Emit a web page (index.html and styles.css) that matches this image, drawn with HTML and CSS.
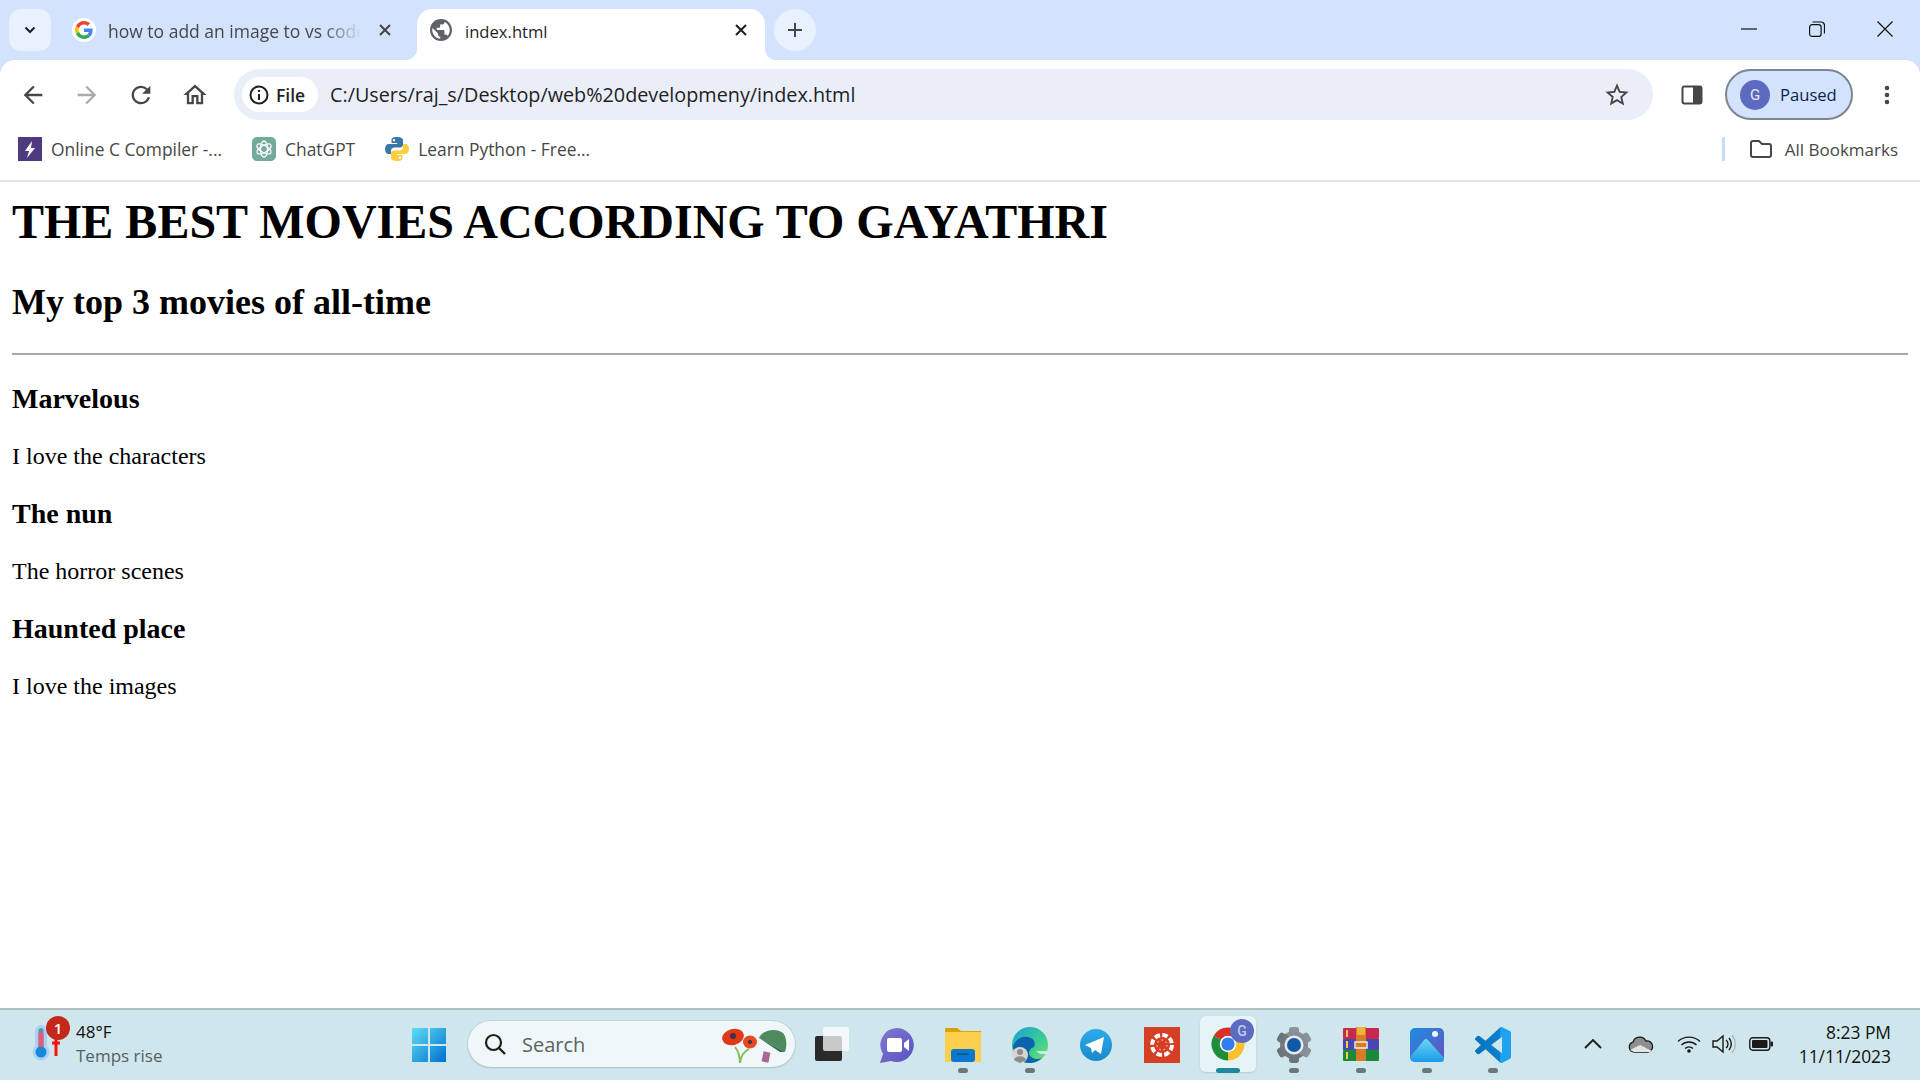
FILE: index.html
```html
<!DOCTYPE html>
<html>
    <head>
        <title>index.html</title>
        <meta charset="utf8"/>
        <link rel="stylesheet" href="styles.css">
    </head>
    <body>
        <div class="tabstrip">
            <div class="tab-search"><svg class="ico-16" viewBox="0 0 16 16"><path d="M3.5 5.5 8 10l4.5-4.5" fill="none" stroke="#1f1f1f" stroke-width="2"/></svg></div>
            <div class="tab">
                <div class="fav-round">
                    <svg class="ico-18" viewBox="0 0 48 48">
                        <path fill="#EA4335" d="M24 9.5c3.54 0 6.71 1.22 9.21 3.6l6.85-6.85C35.9 2.38 30.47 0 24 0 14.62 0 6.51 5.38 2.56 13.22l7.98 6.19C12.43 13.72 17.74 9.5 24 9.5z"/>
                        <path fill="#4285F4" d="M46.98 24.55c0-1.57-.15-3.09-.38-4.55H24v9.02h12.94c-.58 2.96-2.26 5.48-4.78 7.18l7.73 6c4.51-4.18 7.09-10.36 7.09-17.65z"/>
                        <path fill="#FBBC05" d="M10.53 28.59c-.48-1.45-.76-2.99-.76-4.59s.27-3.14.76-4.59l-7.98-6.19C.92 16.46 0 20.12 0 24c0 3.88.92 7.54 2.56 10.78l7.97-6.19z"/>
                        <path fill="#34A853" d="M24 48c6.48 0 11.93-2.13 15.89-5.81l-7.73-6c-2.15 1.45-4.92 2.3-8.16 2.3-6.26 0-11.57-4.22-13.47-9.91l-7.98 6.19C6.51 42.62 14.62 48 24 48z"/>
                    </svg>
                </div>
                <span class="tab-title tab-title-fade">how to add an image to vs code</span>
                <svg class="tab-close" viewBox="0 0 16 16"><path d="M3 3l10 10M13 3 3 13" stroke="#444" stroke-width="2"/></svg>
            </div>
            <div class="tab tab-active">
                <svg class="ico-24" viewBox="0 0 24 24"><path fill="#5f6368" d="M12 1C5.9 1 1 5.9 1 12s4.9 11 11 11 11-4.900 11-11S18.100 1 12 1zm-1 19.700c-4.300-.5-7.700-4.200-7.700-8.700 0-.7.100-1.300.2-2L9 15.500v1.100c0 1.200 1 2.200 2.200 2.200v1.900zm7.600-2.800c-.3-.9-1.100-1.500-2.100-1.500h-1.100v-3.300c0-.6-.5-1.100-1.100-1.100H7.800V9.800H10c.6 0 1.100-.5 1.100-1.100V6.500h2.200c1.200 0 2.200-1 2.200-2.200v-.4c3.200 1.300 5.200 4.400 5.200 8.100 0 2.300-.8 4.400-2.100 5.900z"/></svg>
                <span class="tab-title">index.html</span>
                <svg class="tab-close" viewBox="0 0 16 16"><path d="M3 3l10 10M13 3 3 13" stroke="#1f1f1f" stroke-width="2"/></svg>
            </div>
            <div class="tab-new"><svg class="ico-18" viewBox="0 0 18 18"><path d="M9 2v14M2 9h14" stroke="#474747" stroke-width="2"/></svg></div>
            <div class="win-btns">
                <svg class="ico-win" viewBox="0 0 16 16"><path d="M0 8h16" stroke="#111" stroke-width="1.200"/></svg>
                <svg class="ico-win" viewBox="0 0 16 16"><rect x=".6" y="3.600" width="11.500" height="11.800" rx="2.500" fill="none" stroke="#111" stroke-width="1.200"/><path d="M3.500 1h8.500a3.500 3.500 0 0 1 3.500 3.500v8" fill="none" stroke="#111" stroke-width="1.200"/></svg>
                <svg class="ico-win" viewBox="0 0 16 16"><path d="M.5.500l15 15M15.500.500l-15 15" stroke="#111" stroke-width="1.200"/></svg>
            </div>
        </div>

        <div class="toolbar">
            <div class="nav-btn"><svg class="ico-nav" viewBox="0 0 24 24"><path fill="#474747" d="M20 11H7.830l5.590-5.590L12 4l-8 8 8 8 1.410-1.410L7.830 13H20v-2z"/></svg></div>
            <div class="nav-btn"><svg class="ico-nav" viewBox="0 0 24 24"><path fill="#ababab" d="M12 4l-1.410 1.410L16.170 11H4v2h12.170l-5.580 5.590L12 20l8-8z"/></svg></div>
            <div class="nav-btn"><svg class="ico-nav" viewBox="0 0 24 24"><path fill="#474747" d="M17.650 6.350A7.958 7.958 0 0 0 12 4c-4.420 0-7.990 3.580-7.990 8s3.570 8 7.990 8c3.730 0 6.840-2.550 7.730-6h-2.080A5.990 5.990 0 0 1 12 18c-3.310 0-6-2.690-6-6s2.690-6 6-6c1.660 0 3.140.690 4.220 1.780L13 11h7V4l-2.350 2.350z"/></svg></div>
            <div class="nav-btn"><svg class="ico-nav" viewBox="0 0 24 24"><path fill="#474747" d="M12 5.690l5 4.500V18h-2v-6H9v6H7v-7.810l5-4.500M12 3L2 12h3v8h6v-6h2v6h6v-8h3L12 3z"/></svg></div>
            <div class="omnibox">
                <div class="file-chip">
                    <svg class="ico-20" viewBox="0 0 20 20"><circle cx="10" cy="10" r="8.500" fill="none" stroke="#1f1f1f" stroke-width="2"/><path d="M9 9h2v6H9zM9 5h2v2H9z" fill="#1f1f1f"/></svg>
                    <span>File</span>
                </div>
                <span class="url">C:/Users/raj_s/Desktop/web%20developmeny/index.html</span>
                <svg class="ico-star" viewBox="0 0 24 24"><path fill="#474747" d="M22 9.240l-7.190-.620L12 2 9.190 8.630 2 9.240l5.460 4.730L5.820 21 12 17.270 18.180 21l-1.630-7.030L22 9.240zM12 15.400l-3.760 2.270 1-4.280-3.320-2.880 4.380-.380L12 6.100l1.710 4.040 4.380.380-3.320 2.880 1 4.280L12 15.400z"/></svg>
            </div>
            <div class="side-btn"><svg class="ico-24" viewBox="0 0 24 24"><rect x="2.500" y="3.500" width="19" height="17" rx="2" fill="none" stroke="#474747" stroke-width="2"/><rect x="13" y="3.500" width="9" height="17" fill="#474747"/></svg></div>
            <div class="profile"><div class="avatar">G</div><span>Paused</span></div>
            <div class="menu-btn"><svg class="ico-24" viewBox="0 0 24 24"><circle cx="12" cy="5" r="2.300" fill="#474747"/><circle cx="12" cy="12" r="2.300" fill="#474747"/><circle cx="12" cy="19" r="2.300" fill="#474747"/></svg></div>
        </div>

        <div class="bookmarks">
            <div class="bm">
                <svg class="ico-24" viewBox="0 0 24 24"><rect width="24" height="24" fill="#4f3a7f"/><path d="M14 4 7 14h4l-2 7 8-10h-4z" fill="#fff"/></svg>
                <span>Online C Compiler -...</span>
            </div>
            <div class="bm">
                <svg class="ico-24" viewBox="0 0 24 24"><rect width="24" height="24" rx="5" fill="#74aa9c"/><g fill="none" stroke="#fff" stroke-width="1.300"><ellipse cx="12" cy="12" rx="3.500" ry="8"/><ellipse cx="12" cy="12" rx="3.500" ry="8" transform="rotate(60 12 12)"/><ellipse cx="12" cy="12" rx="3.500" ry="8" transform="rotate(120 12 12)"/></g></svg>
                <span>ChatGPT</span>
            </div>
            <div class="bm">
                <svg class="ico-24" viewBox="0 0 24 24"><path fill="#3a77a8" d="M11.800 0C7.500 0 6.500 1.500 6.500 3.500V6h5.700v1H4C1.500 7 0 9 0 12s1.500 5 3.500 5H6v-3c0-2 1.500-3.500 3.500-3.500h5.500c1.700 0 3-1.300 3-3V3.500C18 1.500 16 0 11.800 0zM9 2a1.200 1.200 0 1 1 0 2.400A1.200 1.200 0 0 1 9 2z"/><path fill="#fbcf3e" d="M12.200 24c4.300 0 5.300-1.500 5.300-3.500V18h-5.700v-1H20c2.500 0 4-2 4-5s-1.500-5-3.500-5H18v3c0 2-1.500 3.500-3.500 3.500H9c-1.700 0-3 1.300-3 3v4C6 22.500 8 24 12.200 24zM15 22a1.200 1.200 0 1 1 0-2.400 1.200 1.200 0 0 1 0 2.400z"/></svg>
                <span>Learn Python - Free...</span>
            </div>
            <div class="bm-all">
                <div class="bm-sep"></div>
                <svg class="ico-24" viewBox="0 0 24 24"><path d="M2 6a2 2 0 0 1 2-2h6l3 3h7a2 2 0 0 1 2 2v9a2 2 0 0 1-2 2H4a2 2 0 0 1-2-2z" fill="none" stroke="#474747" stroke-width="2"/></svg>
                <span>All Bookmarks</span>
            </div>
        </div>

        <div class="page">
            <h1 class="title">THE BEST MOVIES ACCORDING TO GAYATHRI</h1>
            <h2 class="subtitle">My top 3 movies of all-time</h2>
            <hr class="rule">
            <h3 class="movie">Marvelous</h3>
            <p class="note">I love the characters</p>
            <h3 class="movie">The nun</h3>
            <p class="note">The horror scenes</p>
            <h3 class="movie">Haunted place</h3>
            <p class="note">I love the images</p>
        </div>

        <div class="taskbar">
            <div class="weather">
                <svg class="weather-ico" viewBox="0 0 30 38">
                    <rect x="3" y="1" width="12" height="26" rx="6" fill="#a9d3f2"/><circle cx="9" cy="28" r="8.500" fill="#a9d3f2"/>
                    <rect x="6.500" y="4" width="5" height="22" rx="2.500" fill="#6e8db0"/><rect x="6.500" y="9" width="5" height="17" fill="#ea5a78"/>
                    <circle cx="9" cy="28" r="5.500" fill="#1789dc"/>
                    <path d="M24 12v20" stroke="#f5130f" stroke-width="3"/><path d="M20 19h8" stroke="#f5130f" stroke-width="3"/>
                </svg>
                <div class="weather-badge">1</div>
                <div class="weather-text">
                    <span class="weather-temp">48°F</span>
                    <span class="weather-note">Temps rise</span>
                </div>
            </div>
            <div class="start">
                <svg class="ico-36" viewBox="0 0 36 36">
                    <defs><linearGradient id="win" x1="0" y1="0" x2="1" y2="1"><stop offset="0" stop-color="#5fdcf5"/><stop offset="1" stop-color="#0071d0"/></linearGradient></defs>
                    <path fill="url(#win)" d="M1 1h16v16H1zM19 1h16v16H19zM1 19h16v16H1zM19 19h16v16H19z"/>
                </svg>
            </div>
            <div class="search">
                <svg class="ico-24" viewBox="0 0 24 24"><circle cx="10.500" cy="10.500" r="7.500" fill="none" stroke="#1f1f1f" stroke-width="2.200"/><path d="M16 16l6 6" stroke="#1f1f1f" stroke-width="2.400"/></svg>
                <span class="search-text">Search</span>
                <svg class="search-art" viewBox="0 0 68 38">
                    <path d="M19 38c0-7-1-11-5-16M19 38c1-7 3-11 9-14" fill="none" stroke="#85c05a" stroke-width="2"/>
                    <ellipse cx="12" cy="12" rx="11" ry="8" transform="rotate(-15 12 12)" fill="#e0391a"/><circle cx="12" cy="11" r="3" fill="#40304a"/>
                    <ellipse cx="29" cy="17" rx="7" ry="6.500" fill="#e8481f"/><circle cx="29" cy="17" r="2" fill="#40304a"/>
                    <path d="M46 27l-2 10" stroke="#a66a94" stroke-width="7"/>
                    <path fill="#4e8a5c" d="M38 13C42 4 56 3 62 8c4 5 4 13 2 19z"/><path fill="#2f6b4f" d="M38 13l26 14-5 0z"/>
                </svg>
            </div>
            <div class="task-icons">
                <div class="task-item">
                    <svg class="ico-36" viewBox="0 0 36 36"><rect x="2" y="9" width="27" height="25" rx="2" fill="#2a2a2a"/><rect x="10" y="0" width="26" height="24" rx="2" fill="#fff" opacity=".75"/></svg>
                </div>
                <div class="task-item">
                    <svg class="ico-36" viewBox="0 0 36 36">
                        <defs><linearGradient id="meet" x1="0" y1="0" x2="1" y2="1"><stop offset="0" stop-color="#7f7bd1"/><stop offset="1" stop-color="#5a50c0"/></linearGradient></defs>
                        <path fill="url(#meet)" d="M18 1a17 17 0 1 1-6 33L1 36l3-9A17 17 0 0 1 18 1z"/>
                        <rect x="8" y="11" width="15" height="14" rx="2" fill="#fff"/><path d="M25 16l5-4v12l-5-4z" fill="#fff"/>
                    </svg>
                </div>
                <div class="task-item">
                    <svg class="ico-36" viewBox="0 0 36 36">
                        <path fill="#d9a206" d="M0 2a1 1 0 0 1 1-1h11l4 3h20v6H0z"/>
                        <path fill="#fdcf4e" d="M0 5h36v30H0z"/>
                        <rect x="6" y="22" width="24" height="13" rx="3" fill="#0a78cf"/><path d="M12 27h12" stroke="#0a4f8f" stroke-width="1.500"/>
                    </svg>
                    <div class="task-dot"></div>
                </div>
                <div class="task-item">
                    <svg class="ico-36" viewBox="0 0 36 36">
                        <defs><linearGradient id="edge" x1="0" y1="0" x2="1" y2="1"><stop offset="0" stop-color="#1aa0d8"/><stop offset=".6" stop-color="#3ccf8e"/><stop offset="1" stop-color="#7fe06a"/></linearGradient></defs>
                        <circle cx="18" cy="18" r="18" fill="url(#edge)"/>
                        <path fill="#0c62ac" d="M1 20c2-8 9-11 15-10 6 1 8 6 6 10-3 1-5 3-5 6 0 4 7 8 13 5-4 4-9 5-13 5C8 36 2 29 1 20z"/>
                        <path fill="#cfe6ec" d="M24 24h12v3h-8z"/>
                        <circle cx="8" cy="28" r="8" fill="#d8d6d3"/><circle cx="8" cy="25" r="3" fill="#8c8c8c"/><path d="M2 33c1-5 11-5 12 0l-6 3z" fill="#8c8c8c"/>
                    </svg>
                    <div class="task-dot"></div>
                </div>
                <div class="task-item">
                    <svg class="ico-36" viewBox="0 0 36 36">
                        <defs><linearGradient id="tg" x1="0" y1="0" x2="0" y2="1"><stop offset="0" stop-color="#2aabee"/><stop offset="1" stop-color="#1c88c7"/></linearGradient></defs>
                        <circle cx="18" cy="18" r="16" fill="url(#tg)"/>
                        <path fill="#fff" d="M7 18 26 10l-3 17-6-4-3 3-1-5z"/>
                    </svg>
                </div>
                <div class="task-item">
                    <svg class="ico-36" viewBox="0 0 36 36">
                        <rect width="36" height="36" fill="#d63f24"/>
                        <g fill="none" stroke="#fff"><circle cx="18" cy="18" r="10" stroke-width="4" stroke-dasharray="5.500 2.350"/><circle cx="18" cy="18" r="5" stroke-width="1" stroke-dasharray="1.500 3"/></g>
                    </svg>
                </div>
                <div class="task-item task-item-on">
                    <svg class="ico-chrome" viewBox="0 0 24 24">
                        <path fill="#d93025" d="M12 12 2.470 6.500A11 11 0 0 1 21.530 6.500z"/>
                        <path fill="#1e8e3e" d="M12 12 2.470 6.500A11 11 0 0 0 12 23z"/>
                        <path fill="#fbc02d" d="M12 12 21.530 6.500A11 11 0 0 1 12 23z"/>
                        <circle cx="12" cy="12" r="5.500" fill="#fff"/><circle cx="12" cy="12" r="4.400" fill="#2f7df0"/>
                    </svg>
                    <div class="chrome-badge">G</div>
                    <div class="task-bar"></div>
                </div>
                <div class="task-item">
                    <svg class="ico-36" viewBox="0 0 36 36">
                        <defs><linearGradient id="gear" x1="0" y1="0" x2="0" y2="1"><stop offset="0" stop-color="#8c949c"/><stop offset="1" stop-color="#687078"/></linearGradient></defs>
                        <g fill="url(#gear)"><circle cx="18" cy="18" r="14"/><rect x="13" y="0" width="10" height="36" rx="3"/><rect x="13" y="0" width="10" height="36" rx="3" transform="rotate(60 18 18)"/><rect x="13" y="0" width="10" height="36" rx="3" transform="rotate(120 18 18)"/></g>
                        <circle cx="18" cy="18" r="9.500" fill="#e6eaee"/><circle cx="18" cy="18" r="7" fill="#0f5aa8"/>
                    </svg>
                    <div class="task-dot"></div>
                </div>
                <div class="task-item">
                    <svg class="ico-36" viewBox="0 0 36 36">
                        <rect y="1" width="36" height="11" rx="1" fill="#c8274f"/><rect y="12" width="36" height="11" fill="#4a46b0"/><rect y="23" width="36" height="11" rx="1" fill="#1a8a3a"/>
                        <path d="M4 3v7M4 14v7M4 25v7" stroke="#f7d040" stroke-width="2"/>
                        <rect x="13" y="0" width="10" height="34" fill="#d57d26"/><rect x="14" y="0" width="8" height="8" rx="1" fill="#efb23a"/>
                        <rect x="12" y="15" width="12" height="6" fill="none" stroke="#eee" stroke-width="1.500"/>
                    </svg>
                    <div class="task-dot"></div>
                </div>
                <div class="task-item">
                    <svg class="ico-36" viewBox="0 0 36 36">
                        <defs><linearGradient id="pho" x1="0" y1="0" x2="1" y2="1"><stop offset="0" stop-color="#1a8fe0"/><stop offset="1" stop-color="#6a50c0"/></linearGradient><linearGradient id="mnt" x1="0" y1="0" x2="0" y2="1"><stop offset="0" stop-color="#6fd6f5"/><stop offset="1" stop-color="#1a9be8"/></linearGradient></defs>
                        <rect x="1" y="1" width="34" height="34" rx="5" fill="url(#pho)"/>
                        <circle cx="26" cy="7" r="3" fill="#eef4fb"/>
                        <path fill="url(#mnt)" d="M1 30 15 13q2-2 4 0l16 18v1a3 3 0 0 1-3 3H6a5 5 0 0 1-5-5z"/>
                    </svg>
                    <div class="task-dot"></div>
                </div>
                <div class="task-item">
                    <svg class="ico-36" viewBox="0 0 24 24">
                        <defs><linearGradient id="vsc" x1="0" y1="0" x2="1" y2="0"><stop offset="0" stop-color="#0a72bc"/><stop offset=".7" stop-color="#0a80d0"/><stop offset=".71" stop-color="#1fa2f2"/><stop offset="1" stop-color="#1fa2f2"/></linearGradient></defs>
                        <path fill="url(#vsc)" d="M23.150 2.587L18.210.210a1.494 1.494 0 0 0-1.705.290l-9.460 8.630-4.120-3.128a.999.999 0 0 0-1.276.057L.327 7.261A1 1 0 0 0 .326 8.740L3.899 12 .326 15.260a1 1 0 0 0 .001 1.479L1.650 17.940a.999.999 0 0 0 1.276.057l4.120-3.128 9.460 8.630a1.492 1.492 0 0 0 1.704.290l4.942-2.377A1.500 1.500 0 0 0 24 20.060V3.939a1.500 1.500 0 0 0-.850-1.352zm-5.146 14.861L10.826 12l7.178-5.448v10.896z"/>
                    </svg>
                    <div class="task-dot"></div>
                </div>
            </div>
            <div class="tray">
                <svg class="tray-chevron" viewBox="0 0 18 10"><path d="M1 9l8-8 8 8" fill="none" stroke="#1a1a1a" stroke-width="1.800"/></svg>
                <svg class="tray-cloud" viewBox="0 0 26 18"><path d="M6 17a5 5 0 0 1-1-9.800A7 7 0 0 1 18 6a5.500 5.500 0 0 1 2 11z" fill="#8e8e8e" stroke="#1a1a1a" stroke-width="1.300"/><path d="M2 15l10-5 12 6-2 1H6z" fill="#e4e4e4"/></svg>
                <svg class="tray-wifi" viewBox="0 0 24 18"><g fill="none" stroke="#1a1a1a" stroke-width="1.400"><path d="M1 6.500a16 16 0 0 1 22 0"/><path d="M4.500 10a11 11 0 0 1 15 0"/><path d="M8 13.500a6 6 0 0 1 8 0"/></g><circle cx="12" cy="16" r="1.800" fill="#1a1a1a"/></svg>
                <svg class="tray-vol" viewBox="0 0 24 20"><path d="M1 7v6h4l6 5V2L5 7z" fill="none" stroke="#1a1a1a" stroke-width="1.400"/><path d="M14 6a5 5 0 0 1 0 8M17 4a9 9 0 0 1 0 12" fill="none" stroke="#1a1a1a" stroke-width="1.400"/><path d="M20 1a14 14 0 0 1 0 18" fill="none" stroke="#a9b9bd" stroke-width="1.200"/></svg>
                <svg class="tray-bat" viewBox="0 0 24 14"><rect x=".8" y=".8" width="20" height="12.400" rx="3" fill="none" stroke="#1a1a1a" stroke-width="1.400"/><rect x="3" y="3" width="15.500" height="8" rx="1" fill="#1a1a1a"/><rect x="21.500" y="4.500" width="2.500" height="5" rx="1" fill="#1a1a1a"/></svg>
                <div class="clock"><span>8:23 PM</span><span>11/11/2023</span></div>
            </div>
        </div>
    </body>
</html>
```
FILE: styles.css
```css
*{
    box-sizing: border-box;
}
html,body{
    height: 100%;
}
body{
    margin: 0px;
    width: 1920px;
    height: 1080px;
    overflow: hidden;
    display: flex;
    flex-direction: column;
    background-color: #d3e3fd;
    font-family: "Open Sans", "Noto Sans", sans-serif;
    color: #1f1f1f;
}
svg{
    display: block;
    flex: none;
}
.ico-16{ width: 16px; height: 16px; }
.ico-18{ width: 18px; height: 18px; }
.ico-20{ width: 20px; height: 20px; }
.ico-24{ width: 24px; height: 24px; }
.ico-36{ width: 36px; height: 36px; }
.ico-nav{ width: 28px; height: 28px; }

/* tabs */
.tabstrip{
    height: 60px;
    flex: none;
    display: flex;
    align-items: flex-start;
    padding: 9px 0px 0px 9px;
}
.tab-search{
    width: 42px;
    height: 42px;
    border-radius: 12px;
    background-color: #e9f0fe;
    display: flex;
    align-items: center;
    justify-content: center;
}
.tab{
    width: 366px;
    height: 51px;
    display: flex;
    align-items: center;
    padding: 0px 24px 9px 21px;
}
.fav-round{
    width: 24px;
    height: 24px;
    border-radius: 50%;
    background-color: #fff;
    display: flex;
    align-items: center;
    justify-content: center;
    flex: none;
}
.tab-title{
    flex: 1;
    margin-left: 12px;
    padding-top: 2px;
    font-size: 17.5px;
    white-space: nowrap;
    overflow: hidden;
    color: #474747;
}
.tab-title-fade{
    -webkit-mask-image: linear-gradient(to right, #000 85%, transparent 100%);
    mask-image: linear-gradient(to right, #000 85%, transparent 100%);
}
.tab-close{
    width: 16px;
    height: 16px;
    margin-left: 16px;
    flex: none;
}
.tab-active{
    width: 348px;
    position: relative;
    background-color: #fff;
    border-radius: 15px 15px 0px 0px;
    padding: 0px 16px 9px 12px;
}
.tab-active .tab-title{
    font-size: 16.6px;
    color: #1f1f1f;
}
.tab-active:before,
.tab-active:after{
    content: "";
    position: absolute;
    bottom: 0px;
    width: 12px;
    height: 12px;
}
.tab-active:before{
    left: -12px;
    background: radial-gradient(circle at 0 0, transparent 12px, #fff 12.5px);
}
.tab-active:after{
    right: -12px;
    background: radial-gradient(circle at 100% 0, transparent 12px, #fff 12.5px);
}
.tab-new{
    width: 42px;
    height: 42px;
    margin-left: 9px;
    border-radius: 50%;
    background-color: #e9f0fe;
    display: flex;
    align-items: center;
    justify-content: center;
}
.win-btns{
    margin-left: auto;
    display: flex;
    gap: 52px;
    padding: 12px 27px 0px 0px;
}
.ico-win{
    width: 16px;
    height: 16px;
}

/* toolbar */
.toolbar{
    height: 60px;
    flex: none;
    display: flex;
    align-items: center;
    padding: 0px 0px 0px 6px;
    background-color: #fff;
    border-radius: 15px 15px 0px 0px;
}
.nav-btn{
    width: 54px;
    margin-top: 9px;
    display: flex;
    justify-content: center;
}
.omnibox{
    width: 1419px;
    height: 51px;
    margin: 9px 0px 0px 12px;
    border-radius: 26px;
    background-color: #e9eef8;
    display: flex;
    align-items: center;
    padding: 0px 22px 0px 8px;
}
.file-chip{
    width: 76px;
    height: 35px;
    border-radius: 18px;
    background-color: #fff;
    display: flex;
    align-items: center;
    gap: 7px;
    padding-left: 7px;
    font-size: 17.5px;
    font-weight: 600;
}
.url{
    margin-left: 12px;
    font-size: 19.8px;
    color: #1f1f1f;
    white-space: nowrap;
}
.ico-star{
    width: 28px;
    height: 28px;
    margin-left: auto;
}
.side-btn{
    width: 54px;
    margin: 9px 0px 0px 12px;
    display: flex;
    justify-content: center;
}
.profile{
    width: 128px;
    height: 51px;
    margin: 9px 0px 0px 6px;
    border: 2px solid #7d8590;
    border-radius: 26px;
    background-color: #d3e3fd;
    display: flex;
    align-items: center;
    gap: 10px;
    padding-left: 13px;
    font-size: 16.6px;
    color: #0a1f4e;
}
.avatar{
    width: 30px;
    height: 30px;
    border-radius: 50%;
    background-color: #5c6bc0;
    color: #e8eaf6;
    font-family: Roboto, sans-serif;
    font-size: 15px;
    display: flex;
    align-items: center;
    justify-content: center;
    flex: none;
}
.menu-btn{
    width: 44px;
    margin: 9px 0px 0px 12px;
    display: flex;
    justify-content: center;
}

/* bookmarks */
.bookmarks{
    height: 62px;
    flex: none;
    display: flex;
    align-items: center;
    padding: 0px 22px 2px 18px;
    background-color: #fff;
    border-bottom: 2px solid #e1e1e1;
    font-size: 17.4px;
    color: #474747;
}
.bm{
    display: flex;
    align-items: center;
    gap: 9px;
    margin-right: 30px;
    white-space: nowrap;
}
.bm-all{
    margin-left: auto;
    display: flex;
    align-items: center;
    white-space: nowrap;
    font-size: 17px;
}
.bm-sep{
    width: 3px;
    height: 24px;
    margin-right: 24px;
    background-color: #c7dcfb;
}
.bm-all span{
    margin-left: 12px;
}

/* the page itself */
.page{
    flex: 1;
    padding: 12px;
    background-color: #fff;
    color: #000;
    font-family: "Liberation Serif", "Times New Roman", serif;
}
.title{
    margin: 0px 0px 33px 0px;
    font-size: 48px;
    line-height: 55px;
}
.subtitle{
    margin: 0px 0px 30px 0px;
    font-size: 36px;
    line-height: 41px;
}
.rule{
    margin: 0px 0px 28px 0px;
    border: 0px;
    height: 2px;
    background-color: #a8a8a8;
}
.movie{
    margin: 0px 0px 28px 0px;
    font-size: 28px;
    line-height: 32px;
}
.note{
    margin: 0px 0px 28px 0px;
    font-size: 24px;
    line-height: 27px;
}

/* taskbar */
.taskbar{
    height: 72px;
    flex: none;
    display: flex;
    background-color: #cfe6ec;
    border-top: 2px solid #b2bfc0;
}
.weather{
    width: 406px;
    flex: none;
    display: flex;
    position: relative;
    padding: 14px 0px 0px 32px;
}
.weather-ico{
    width: 30px;
    height: 38px;
}
.weather-badge{
    position: absolute;
    left: 46px;
    top: 6px;
    width: 24px;
    height: 24px;
    border-radius: 50%;
    background-color: #c4281c;
    color: #fff;
    font-size: 15px;
    font-weight: 600;
    text-align: center;
    line-height: 24px;
}
.weather-text{
    display: flex;
    flex-direction: column;
    margin-left: 14px;
    margin-top: -4.5px;
    line-height: 24px;
    font-size: 17px;
}
.weather-temp{
    color: #111;
}
.weather-note{
    color: #555f63;
}
.start{
    width: 44px;
    flex: none;
    padding: 17px 0px 0px 5px;
}
.search{
    width: 327px;
    height: 46px;
    flex: none;
    margin: 11px 0px 0px 18px;
    display: flex;
    align-items: center;
    padding: 0px 6px 0px 15px;
    border-radius: 23px;
    background-color: #eff7f9;
    box-shadow: 0px 1px 2px #a9c0c6, 0px 0px 0px 1px #c2d9de;
}
.search-text{
    margin-left: 15px;
    font-size: 20px;
    color: #5b6366;
}
.search-art{
    width: 68px;
    height: 38px;
    margin-left: auto;
}
.task-icons{
    display: flex;
    margin-left: 3px;
}
.task-item{
    width: 66.2px;
    height: 70px;
    display: flex;
    flex-direction: column;
    align-items: center;
    padding: 17px 0px 7px 0px;
    position: relative;
}
.task-dot{
    width: 10px;
    height: 5px;
    margin-top: auto;
    border-radius: 3px;
    background-color: #6b777b;
}
.task-item-on:before{
    content: "";
    position: absolute;
    left: 5px;
    right: 5px;
    top: 6px;
    bottom: 8px;
    border-radius: 6px;
    background-color: #e6f3f7;
    box-shadow: 0px 1px 2px #b4ccd2;
}
.ico-chrome{
    width: 36px;
    height: 36px;
    position: relative;
    top: -1px;
}
.chrome-badge{
    position: absolute;
    left: 35px;
    top: 9px;
    width: 24px;
    height: 24px;
    border-radius: 50%;
    background-color: #5c6bc0;
    color: #c5cae9;
    font-family: Roboto, sans-serif;
    font-size: 14px;
    font-weight: 500;
    text-align: center;
    line-height: 24px;
}
.task-bar{
    width: 24px;
    height: 5px;
    margin-top: auto;
    border-radius: 3px;
    background-color: #1f8a9e;
    position: relative;
}
.tray{
    flex: 1;
    display: flex;
    align-items: center;
    padding-bottom: 2px;
}
.tray-chevron{
    width: 18px;
    height: 10px;
    margin-left: 58px;
}
.tray-cloud{
    width: 26px;
    height: 18px;
    margin-left: 26px;
}
.tray-wifi{
    width: 24px;
    height: 18px;
    margin-left: 23px;
}
.tray-vol{
    width: 24px;
    height: 20px;
    margin-left: 11px;
}
.tray-bat{
    width: 24px;
    height: 14px;
    margin-left: 13px;
}
.clock{
    margin-left: auto;
    padding-right: 29px;
    display: flex;
    flex-direction: column;
    align-items: flex-end;
    font-size: 17.4px;
    line-height: 24px;
    color: #111;
}
```
